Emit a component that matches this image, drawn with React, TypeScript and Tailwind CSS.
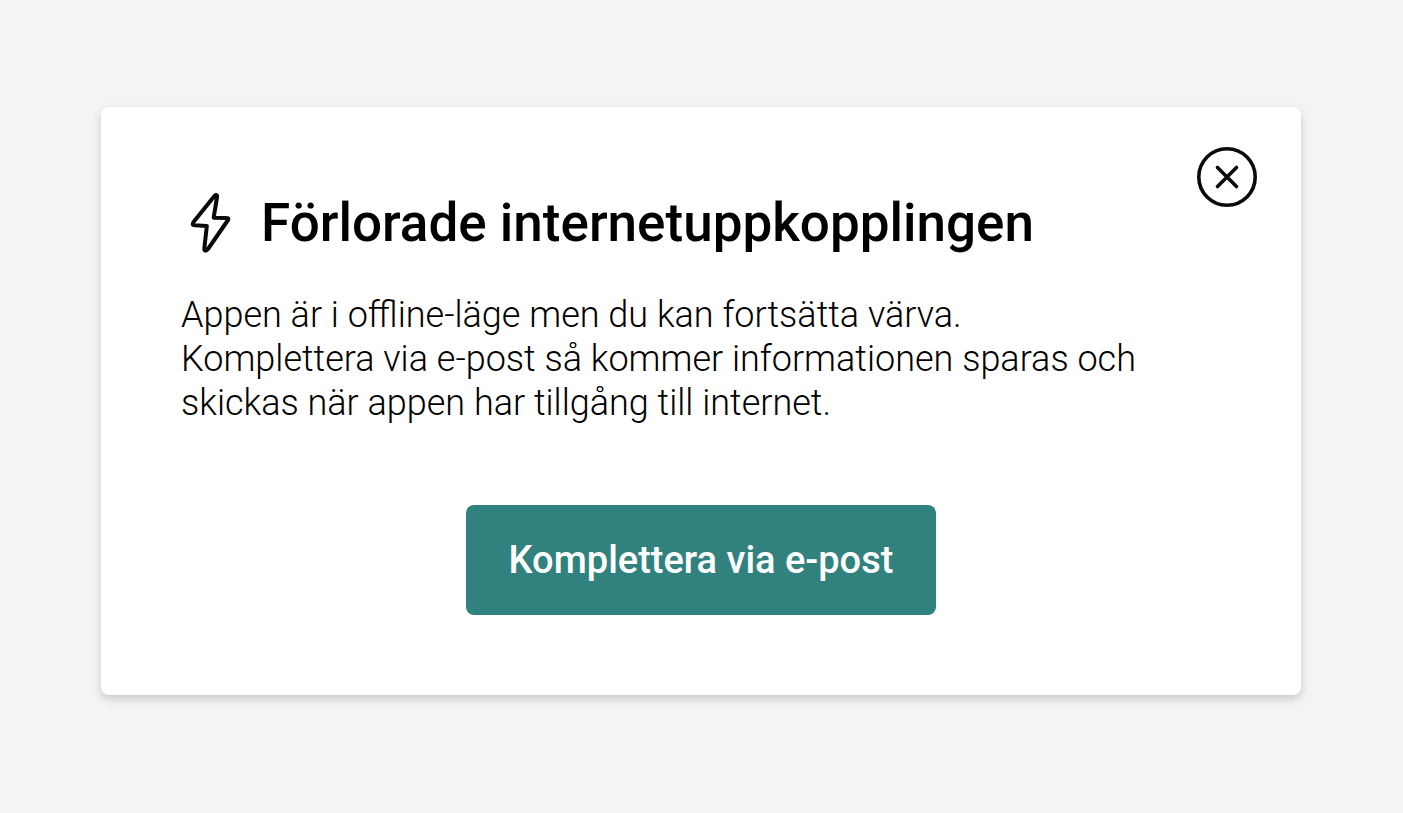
function BoltIcon() {
  return (
    <svg viewBox="5 3 180 225" className="h-[75px] w-[60px] shrink-0" fill="none" aria-hidden="true">
      <path
        d="M106 32 L42 112 Q36 120 46 121 L82.500 123 L75 190 Q74 197 78 197 Q82 197 86 192 L146 105 Q150 99 141 99 L103 98 L113 37 Q114 30 111 30 Q108 29 106 32 Z"
        stroke="#0a0a0a"
        strokeWidth="12"
        strokeLinejoin="round"
      />
    </svg>
  );
}

function CloseIcon() {
  return (
    <svg viewBox="0 0 60 60" className="size-[60px]" fill="none" stroke="#0a0a0a" aria-hidden="true">
      <circle cx="30" cy="30" r="28.200" strokeWidth="3.600" />
      <path d="M20.500 20.500 L39.500 39.500 M39.500 20.500 L20.500 39.500" strokeWidth="3.600" strokeLinecap="round" />
    </svg>
  );
}

export default function App() {
  return (
    <main className="flex min-h-screen items-start justify-center bg-[#f4f4f2] py-[107px] pr-[102px] pl-[101px] font-['Roboto',sans-serif] text-black">
      <section
        role="dialog"
        aria-labelledby="title"
        className="relative w-full max-w-[1200px] rounded-lg bg-white p-20 shadow-[0_4px_10px_rgba(0,0,0,0.18)]"
      >
        <button type="button" aria-label="Stäng" className="absolute top-10 right-11 cursor-pointer rounded-full">
          <CloseIcon />
        </button>
        <header className="flex h-[72px] items-center gap-5">
          <BoltIcon />
          <h1 id="title" className="text-[53px] leading-[72px] font-medium">
            Förlorade internetuppkopplingen
          </h1>
        </header>
        <p className="mt-[34px] text-[36px] leading-[44px] font-light">
          Appen är i offline-läge men du kan fortsätta värva.
          <br />
          Komplettera via e-post så kommer informationen sparas och skickas när appen har tillgång till internet.
        </p>
        <div className="mt-20 flex justify-center">
          <button
            type="button"
            className="h-[110px] cursor-pointer rounded-lg bg-[#31827f] px-[43px] text-[38px] leading-[48px] font-medium text-white"
          >
            Komplettera via e-post
          </button>
        </div>
      </section>
    </main>
  );
}
